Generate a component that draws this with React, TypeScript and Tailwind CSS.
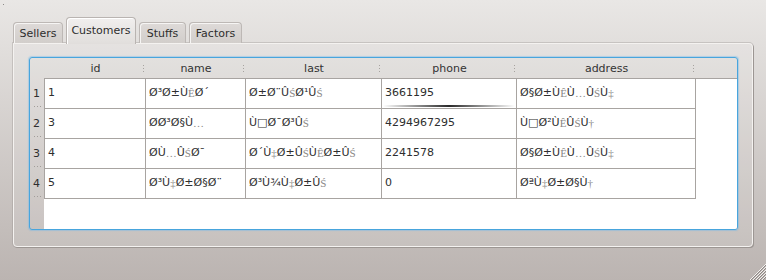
import React from "react";

const rows: string[][] = [
  ["1", "Ø³Ø±ÙÊØ´", "Ø±Ø¨ÛŚØ¹ÛŚ", "3661195", "Ø§Ø±ÙÊÙ…ÛŚÙ‡"],
  ["3", "ØØ³Ø§Ù…", "Ù□Ø¯Ø³ÛŚ", "4294967295", "Ù□Ø²ÙÊÛŚÙ†"],
  ["4", "ØÙ…ÛŚØ¯", "Ø´Ù‡Ø±ÛŚÙÊØ±ÛŚ", "2241578", "Ø§Ø±ÙÊÙ…ÛŚÙ‡"],
  ["5", "Ø³Ù‡Ø±Ø§Ø¨", "Ø³Ù¾Ù‡Ø±ÛŚ", "0", "ØªÙ‡Ø±Ø§Ù†"],
];

const cols = [
  { name: "id", w: "w-[101px]" },
  { name: "name", w: "w-[100px]" },
  { name: "last", w: "w-[136px]" },
  { name: "phone", w: "w-[135px]" },
  { name: "address", w: "w-[179px]" },
];

const grayChars = "ÊŚ‡†…";

function Garbled({ s }: { s: string }) {
  return (
    <>
      {Array.from(s).map((c, i) =>
        grayChars.includes(c) ? (
          <span key={i} className="text-[#8a8886] font-['Liberation_Serif',serif]">
            {c}
          </span>
        ) : (
          <span key={i}>{c}</span>
        )
      )}
    </>
  );
}

function Handle() {
  return (
    <div className="flex flex-col gap-[2px]">
      <div className="w-[1px] h-[1px] bg-[#a7a39f]" />
      <div className="w-[1px] h-[1px] bg-[#a7a39f]" />
      <div className="w-[1px] h-[1px] bg-[#a7a39f]" />
    </div>
  );
}

function Tab({ label, selected, w }: { label: string; selected?: boolean; w: string }) {
  if (selected) {
    return (
      <div
        className={`${w} h-[27px] -mb-px z-10 relative rounded-t-[4px] border border-b-0 border-[#b9b4b1] bg-gradient-to-b from-[#f1efee] to-[#e1dedc] shadow-[inset_1px_1px_0_#ffffff] flex items-center justify-center pt-[1px]`}
      >
        {label}
      </div>
    );
  }
  return (
    <div
      className={`${w} h-[21px] rounded-t-[4px] border border-b-0 border-[#bdb8b5] bg-gradient-to-b from-[#dedad8] to-[#d2cecb] shadow-[inset_1px_1px_0_#f6f5f4] flex items-center justify-center pt-[2px]`}
    >
      {label}
    </div>
  );
}

export default function App() {
  return (
    <div className="relative w-[766px] h-[280px] overflow-hidden bg-gradient-to-b from-[#e9e7e5] to-[#bbb4b1] font-['DejaVu_Sans',sans-serif] text-[11px] text-[#2e2e2e]">
      <div className="absolute left-[3px] top-[4px] w-[1px] h-[1px] bg-[#8d8a88]" />
      {/* tabs */}
      <div className="flex items-end gap-[3px] pt-[17px] pl-[13px] h-[43px]">
        <Tab label="Sellers" w="w-[50px]" />
        <Tab label="Customers" w="w-[70px]" selected />
        <Tab label="Stuffs" w="w-[47px]" />
        <Tab label="Factors" w="w-[53px]" />
      </div>
      {/* pane */}
      <div className="ml-[13px] w-[740px] h-[204px] rounded-[4px] rounded-tl-none border border-[#f4f2f0] bg-white/10 shadow-[1px_1px_0_#9c9693,0_0_0_1px_rgba(150,144,140,0.35)] pt-[13px] pl-[15px]">
        {/* table frame */}
        <div className="w-[709px] h-[173px] rounded-[3px] border border-[#48a5dd] shadow-[0_0_1px_1px_rgba(110,185,235,0.45)] flex flex-col overflow-hidden">
          {/* header */}
          <div className="flex h-[20px] shrink-0 text-[#333] pt-[2px]">
            <div className="w-[15px]" />
            {cols.map((c) => (
              <div key={c.name} className={`${c.w} relative flex items-center justify-center`}>
                {c.name}
                <div className="absolute right-[2px] top-[5px]">
                  <Handle />
                </div>
              </div>
            ))}
          </div>
          {/* body */}
          <div className="flex flex-1">
            <div className="w-[14px] flex flex-col pt-[1px]">
              {rows.map((r, i) => (
                <div key={i} className="h-[30px] relative flex items-center pl-[3px]">
                  {i + 1}
                  <div className="absolute left-[4px] bottom-[2px] flex gap-[2px]">
                    <div className="w-[1px] h-[1px] bg-[#a29e9a]" />
                    <div className="w-[1px] h-[1px] bg-[#a29e9a]" />
                    <div className="w-[1px] h-[1px] bg-[#a29e9a]" />
                  </div>
                </div>
              ))}
            </div>
            <div className="flex-1 bg-white">
              <div className="border-t border-[#a8a4a1]">
                {rows.map((r, i) => (
                  <div key={i} className="flex h-[30px] border-l border-[#a8a4a1] w-fit">
                    {r.map((cell, j) => (
                      <div
                        key={j}
                        className={`${cols[j].w} relative border-r border-b border-[#a8a4a1] flex items-center pl-[3px] whitespace-nowrap overflow-hidden`}
                      >
                        <Garbled s={cell} />
                        {i === 0 && j === 3 && (
                          <div className="absolute left-[1px] right-[1px] bottom-[1px] h-[2px] rounded-full bg-gradient-to-r from-transparent via-[#111] to-transparent opacity-90" />
                        )}
                      </div>
                    ))}
                  </div>
                ))}
              </div>
            </div>
          </div>
        </div>
      </div>
      {/* size grip */}
      <svg className="absolute right-0 bottom-0" width="16" height="16" viewBox="0 0 16 16">
        {[0, 3, 6, 9, 12].map((o) => (
          <g key={o}>
            <line x1={o} y1={16} x2={16} y2={o} stroke="#f4f2f0" strokeWidth="1" />
            <line x1={o + 1} y1={16} x2={16} y2={o + 1} stroke="#8e8885" strokeWidth="1" />
          </g>
        ))}
      </svg>
    </div>
  );
}
